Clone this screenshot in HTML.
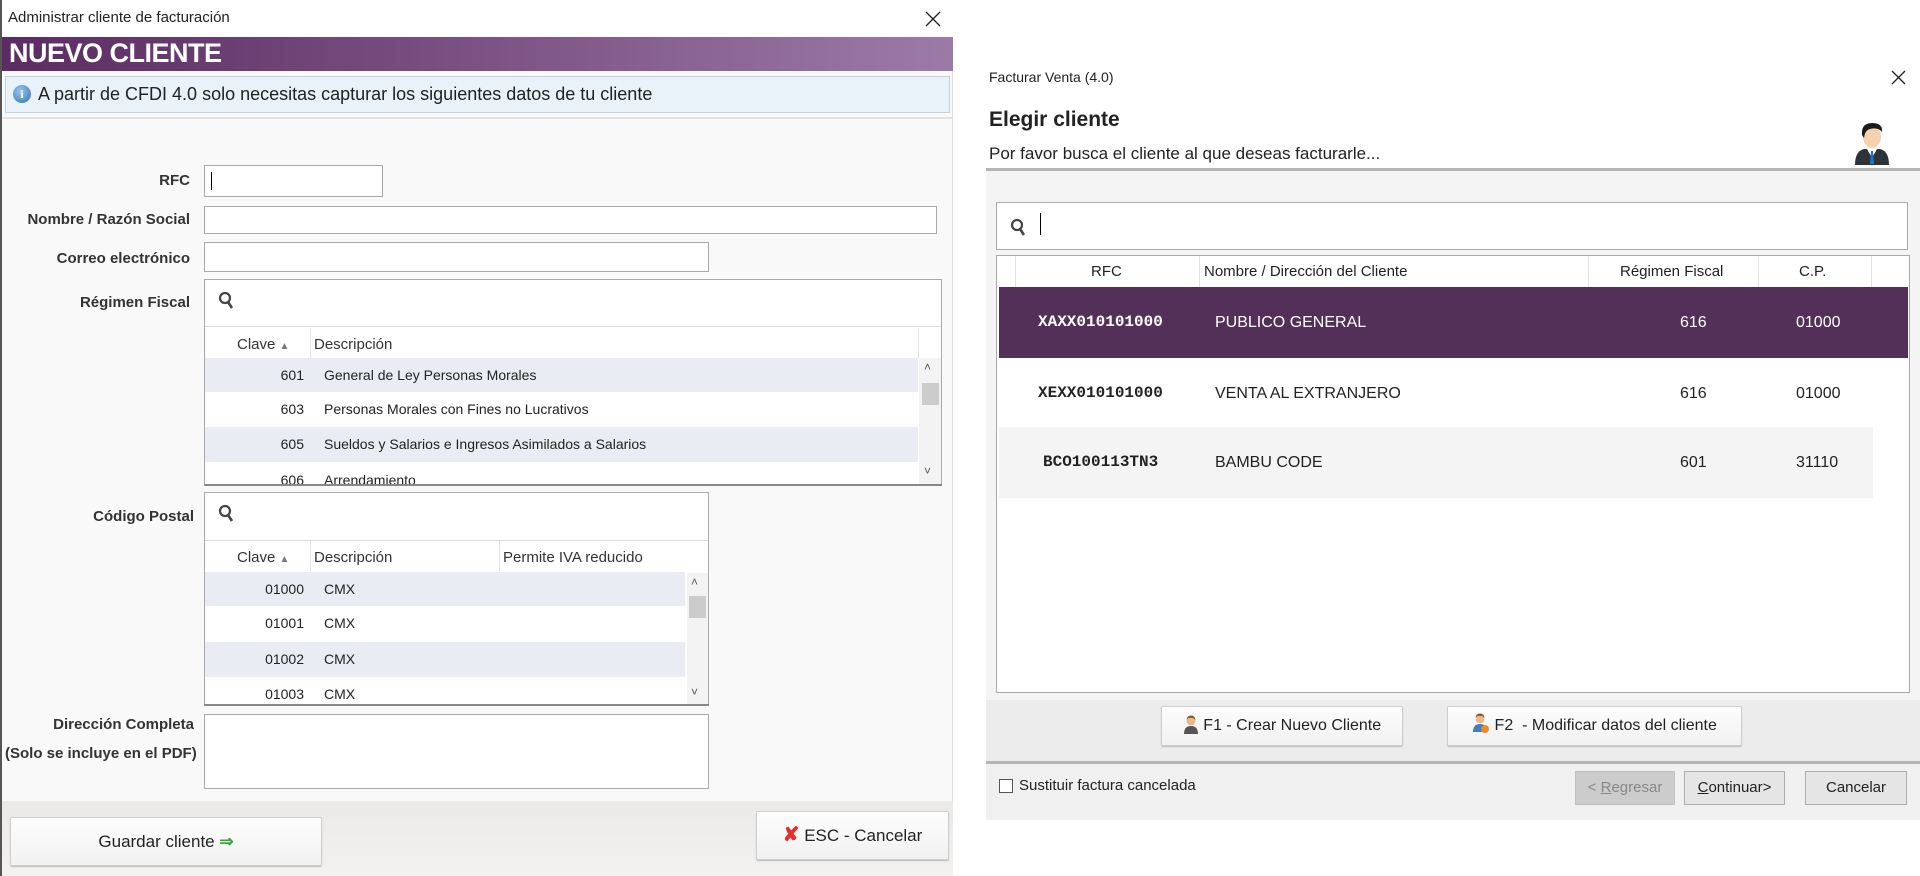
<!DOCTYPE html>
<html><head><meta charset="utf-8"><style>
*{box-sizing:border-box;margin:0;padding:0}
body{width:1920px;height:876px;background:#fff;font-family:"Liberation Sans",sans-serif;color:#222;position:relative;overflow:hidden;font-size:15px}
.a{position:absolute}
.inp{position:absolute;background:#fff;border:1px solid #a9a9a9}
.lbl{position:absolute;text-align:right;width:190px;left:0;font-size:15px;font-weight:bold;color:#333}
.row{position:absolute;left:205px;height:35px;font-size:14px;line-height:35px}
.g{background:#e9edf3}
.code{position:absolute;text-align:right;width:99px;left:0}
.desc{position:absolute;left:119px}
.btn{position:absolute;background:linear-gradient(#fdfdfd,#f1f1f1);border:1px solid #cfcfcf;border-radius:2px;text-align:center;font-size:16px;box-shadow:0 1px 1px #bbb}
.mono{font-family:"Liberation Mono",monospace;font-weight:bold;font-size:16px}
.rr{position:absolute;left:999px;height:71px;line-height:71px;font-size:16px}
.wb{position:absolute;background:#e5e5e5;border:1px solid #adadad;font-size:15px;text-align:center;line-height:32px;height:34px}
</style></head><body>
<!-- LEFT DIALOG -->
<div class="a" style="left:0;top:0;width:953px;height:876px;background:#f9f9f9;border-left:2px solid #555;border-right:1px solid #ddd"></div>
<div class="a" style="left:2px;top:0;width:951px;height:37px;background:#fff"></div>
<div class="a" style="left:8px;top:9px;font-size:15px">Administrar cliente de facturación</div>
<svg class="a" style="left:925px;top:11px" width="16" height="16"><path d="M1 1L15 15M15 1L1 15" stroke="#222" stroke-width="1.3"/></svg>
<div class="a" style="left:2px;top:37px;width:951px;height:34px;background:linear-gradient(90deg,#5b2c63,#7b5283 50%,#9c7aa7)"></div>
<div class="a" style="left:9px;top:38px;color:#fff;font-weight:bold;font-size:27px;letter-spacing:-0.5px">NUEVO CLIENTE</div>
<div class="a" style="left:5px;top:76px;width:945px;height:37px;background:#e9f2f9;border:1px solid #bcd5e6"></div>
<div class="a" style="left:13px;top:85px;width:18px;height:18px;border-radius:50%;background:radial-gradient(circle at 40% 35%,#9cc8ee,#2c6eb3);color:#fff;font-size:12px;font-weight:bold;text-align:center;line-height:18px;font-family:'Liberation Serif',serif">i</div>
<div class="a" style="left:38px;top:84px;font-size:18px">A partir de CFDI 4.0 solo necesitas capturar los siguientes datos de tu cliente</div>
<div class="a" style="left:2px;top:117px;width:951px;height:2px;background:#e2e2e2"></div>

<div class="lbl" style="top:172px">RFC</div>
<div class="inp" style="left:204px;top:165px;width:179px;height:32px"><div class="a" style="left:6px;top:6px;width:1px;height:18px;background:#000"></div></div>
<div class="lbl" style="top:211px">Nombre / Razón Social</div>
<div class="inp" style="left:204px;top:206px;width:733px;height:28px"></div>
<div class="lbl" style="top:250px">Correo electrónico</div>
<div class="inp" style="left:204px;top:242px;width:505px;height:30px"></div>
<div class="lbl" style="top:294px">Régimen Fiscal</div>
<div class="inp" style="left:204px;top:279px;width:738px;height:206px;overflow:hidden">
 <svg class="a" style="left:13px;top:11px" width="18" height="20"><circle cx="7" cy="7" r="5" fill="none" stroke="#444" stroke-width="2.2"/><line x1="10" y1="11" x2="14" y2="17" stroke="#444" stroke-width="2.6"/></svg>
 <div class="a" style="left:0;top:46px;width:736px;height:1px;background:#ddd"></div>
 <div class="a" style="left:32px;top:56px;font-size:15px;color:#333">Clave <span style="font-size:10px;color:#777">▲</span></div>
 <div class="a" style="left:105px;top:48px;width:1px;height:30px;background:#e3e3e3"></div>
 <div class="a" style="left:109px;top:56px;font-size:15px;color:#333">Descripción</div>
 <div class="a" style="left:713px;top:48px;width:1px;height:30px;background:#e3e3e3"></div>
 <div class="a" style="left:714px;top:78px;width:22px;height:128px;background:#f3f3f3"></div>
 <div class="a" style="left:719px;top:80px;font-size:12px;color:#555">˄</div>
 <div class="a" style="left:717px;top:103px;width:17px;height:22px;background:#ccc"></div>
 <div class="a" style="left:719px;top:184px;font-size:12px;color:#555">˅</div>
</div>
<div class="row g" style="top:358px;width:713px"><span class="code">601</span><span class="desc">General de Ley Personas Morales</span></div>
<div class="row" style="top:392px;width:713px;background:#fff"><span class="code">603</span><span class="desc">Personas Morales con Fines no Lucrativos</span></div>
<div class="row g" style="top:427px;width:713px"><span class="code">605</span><span class="desc">Sueldos y Salarios e Ingresos Asimilados a Salarios</span></div>
<div class="row" style="top:463px;width:713px;height:21px;overflow:hidden;background:#fff;line-height:35px"><span class="code">606</span><span class="desc">Arrendamiento</span></div>
<div class="a" style="left:204px;top:484px;width:738px;height:2px;background:#888"></div>

<div class="lbl" style="top:508px;width:194px">Código Postal</div>
<div class="inp" style="left:204px;top:492px;width:505px;height:214px;overflow:hidden">
 <svg class="a" style="left:13px;top:11px" width="18" height="20"><circle cx="7" cy="7" r="5" fill="none" stroke="#444" stroke-width="2.2"/><line x1="10" y1="11" x2="14" y2="17" stroke="#444" stroke-width="2.6"/></svg>
 <div class="a" style="left:0;top:47px;width:503px;height:1px;background:#ddd"></div>
 <div class="a" style="left:32px;top:56px;font-size:15px;color:#333">Clave <span style="font-size:10px;color:#777">▲</span></div>
 <div class="a" style="left:105px;top:48px;width:1px;height:30px;background:#e3e3e3"></div>
 <div class="a" style="left:109px;top:56px;font-size:15px;color:#333">Descripción</div>
 <div class="a" style="left:294px;top:48px;width:1px;height:30px;background:#e3e3e3"></div>
 <div class="a" style="left:298px;top:56px;font-size:15px;color:#333">Permite IVA reducido</div>
 <div class="a" style="left:482px;top:80px;width:21px;height:134px;background:#f3f3f3"></div>
 <div class="a" style="left:486px;top:82px;font-size:12px;color:#555">˄</div>
 <div class="a" style="left:484px;top:103px;width:17px;height:22px;background:#ccc"></div>
 <div class="a" style="left:486px;top:192px;font-size:12px;color:#555">˅</div>
</div>
<div class="row g" style="top:572px;width:480px"><span class="code">01000</span><span class="desc">CMX</span></div>
<div class="row" style="top:606px;width:480px;background:#fff"><span class="code">01001</span><span class="desc">CMX</span></div>
<div class="row g" style="top:642px;width:480px"><span class="code">01002</span><span class="desc">CMX</span></div>
<div class="row" style="top:677px;width:480px;height:27px;overflow:hidden;background:#fff"><span class="code">01003</span><span class="desc">CMX</span></div>
<div class="a" style="left:204px;top:704px;width:505px;height:2px;background:#888"></div>

<div class="lbl" style="top:716px;width:194px">Dirección Completa</div>
<div class="a" style="left:5px;top:745px;font-size:15px;font-weight:bold;color:#333">(Solo se incluye en el PDF)</div>
<div class="inp" style="left:204px;top:714px;width:505px;height:75px"></div>

<div class="a" style="left:2px;top:801px;width:951px;height:75px;background:linear-gradient(#ebe9e7,#f3f2f1)"></div>
<div class="btn" style="left:10px;top:817px;width:312px;height:49px;line-height:47px;font-size:17px">Guardar cliente <span style="color:#3aa33a;font-weight:bold">⇒</span></div>
<div class="btn" style="left:756px;top:811px;width:193px;height:49px;line-height:47px;font-size:17px"><span style="color:#e0312d;font-weight:bold;font-size:20px">✘</span> ESC - Cancelar</div>

<!-- RIGHT DIALOG -->
<div class="a" style="left:989px;top:69px;font-size:14px">Facturar Venta (4.0)</div>
<svg class="a" style="left:1891px;top:70px" width="15" height="15"><path d="M1 1L14 14M14 1L1 14" stroke="#222" stroke-width="1.3"/></svg>
<div class="a" style="left:989px;top:108px;font-size:21px;font-weight:bold">Elegir cliente</div>
<div class="a" style="left:989px;top:144px;font-size:17px">Por favor busca el cliente al que deseas facturarle...</div>
<svg class="a" style="left:1852px;top:118px" width="40" height="48" viewBox="0 0 40 48">
 <path d="M3 47 Q3 33 12 31 L28 31 Q37 33 37 47Z" fill="#2e3338"/>
 <path d="M15 31 L20 40 L25 31Z" fill="#fff"/>
 <path d="M19 33 L21 33 L22 46 L18 46Z" fill="#1e74c4"/>
 <ellipse cx="20" cy="19" rx="9" ry="11" fill="#f3d2ad"/>
 <path d="M10 17 Q9 5 20 5 Q31 5 30 14 Q26 9 18 11 Q13 12 12 20Z" fill="#1b1b1b"/>
</svg>
<div class="a" style="left:986px;top:168px;width:934px;height:3px;background:#b5b5b5"></div>
<div class="a" style="left:986px;top:171px;width:934px;height:529px;background:#f4f4f4"></div>
<div class="a" style="left:996px;top:202px;width:912px;height:48px;background:#fff;border:1px solid #a9a9a9">
 <svg class="a" style="left:13px;top:15px" width="18" height="20"><circle cx="7" cy="7" r="5" fill="none" stroke="#444" stroke-width="2.2"/><line x1="10" y1="11" x2="14" y2="17" stroke="#444" stroke-width="2.6"/></svg>
 <div class="a" style="left:43px;top:10px;width:1px;height:22px;background:#000"></div>
</div>
<div class="a" style="left:996px;top:255px;width:914px;height:438px;background:#fff;border:1px solid #a9a9a9"></div>
<div class="a" style="left:1015px;top:256px;width:1px;height:31px;background:#e3e3e3"></div>
<div class="a" style="left:1199px;top:256px;width:1px;height:31px;background:#e3e3e3"></div>
<div class="a" style="left:1588px;top:256px;width:1px;height:31px;background:#e3e3e3"></div>
<div class="a" style="left:1758px;top:256px;width:1px;height:31px;background:#e3e3e3"></div>
<div class="a" style="left:1871px;top:256px;width:1px;height:31px;background:#e3e3e3"></div>
<div class="a" style="left:1091px;top:263px;font-size:15px">RFC</div>
<div class="a" style="left:1204px;top:263px;font-size:15px">Nombre / Dirección del Cliente</div>
<div class="a" style="left:1620px;top:263px;font-size:15px">Régimen Fiscal</div>
<div class="a" style="left:1799px;top:263px;font-size:15px">C.P.</div>

<div class="rr" style="top:287px;width:909px;background:#523057;color:#fff">
 <span class="a mono" style="left:39px">XAXX010101000</span><span class="a" style="left:216px">PUBLICO GENERAL</span><span class="a" style="left:681px">616</span><span class="a" style="left:797px">01000</span></div>
<div class="rr" style="top:358px;width:909px;background:#fff">
 <span class="a mono" style="left:39px">XEXX010101000</span><span class="a" style="left:216px">VENTA AL EXTRANJERO</span><span class="a" style="left:681px">616</span><span class="a" style="left:797px">01000</span></div>
<div class="rr" style="top:427px;width:874px;background:#f4f4f4">
 <span class="a mono" style="left:44px">BCO100113TN3</span><span class="a" style="left:216px">BAMBU CODE</span><span class="a" style="left:681px">601</span><span class="a" style="left:797px">31110</span></div>

<div class="a" style="left:986px;top:700px;width:934px;height:61px;background:#ececec"></div>
<div class="btn" style="left:1161px;top:706px;width:242px;height:40px;line-height:38px">
 <svg style="vertical-align:-4px" width="16" height="20" viewBox="0 0 16 20"><path d="M1 20 Q1 12 8 12 Q15 12 15 20Z" fill="#555"/><circle cx="8" cy="7" r="4.5" fill="#e8b989"/><path d="M3.5 6 Q4 1.5 8 1.5 Q12 1.5 12.5 6 Q10 3.5 8 4 Q5 3.5 3.5 6Z" fill="#8a5a2e"/></svg> F1 - Crear Nuevo Cliente</div>
<div class="btn" style="left:1447px;top:706px;width:295px;height:40px;line-height:38px">
 <svg style="vertical-align:-4px" width="18" height="22" viewBox="0 0 18 22"><path d="M1 20 Q1 12 8 12 Q15 12 15 20Z" fill="#3c7fc8"/><circle cx="8" cy="7" r="4.5" fill="#e8b989"/><path d="M3.5 6 Q4 1.5 8 1.5 Q12 1.5 12.5 6 Q10 3.5 8 4 Q5 3.5 3.5 6Z" fill="#8a5a2e"/><circle cx="13" cy="17" r="4" fill="#f08a1c"/></svg> F2&nbsp; - Modificar datos del cliente</div>
<div class="a" style="left:986px;top:761px;width:934px;height:3px;background:#b5b5b5"></div>
<div class="a" style="left:986px;top:764px;width:934px;height:56px;background:#f0f0f0"></div>
<div class="a" style="left:999px;top:779px;width:14px;height:14px;background:#fff;border:1px solid #555"></div>
<div class="a" style="left:1019px;top:777px;font-size:15px">Sustituir factura cancelada</div>
<div class="wb" style="left:1575px;top:771px;width:100px;background:#ccc;border-color:#bfbfbf;color:#888">&lt; <u>R</u>egresar</div>
<div class="wb" style="left:1684px;top:771px;width:101px"><u>C</u>ontinuar&gt;</div>
<div class="wb" style="left:1805px;top:771px;width:102px">Cancelar</div>
</body></html>
